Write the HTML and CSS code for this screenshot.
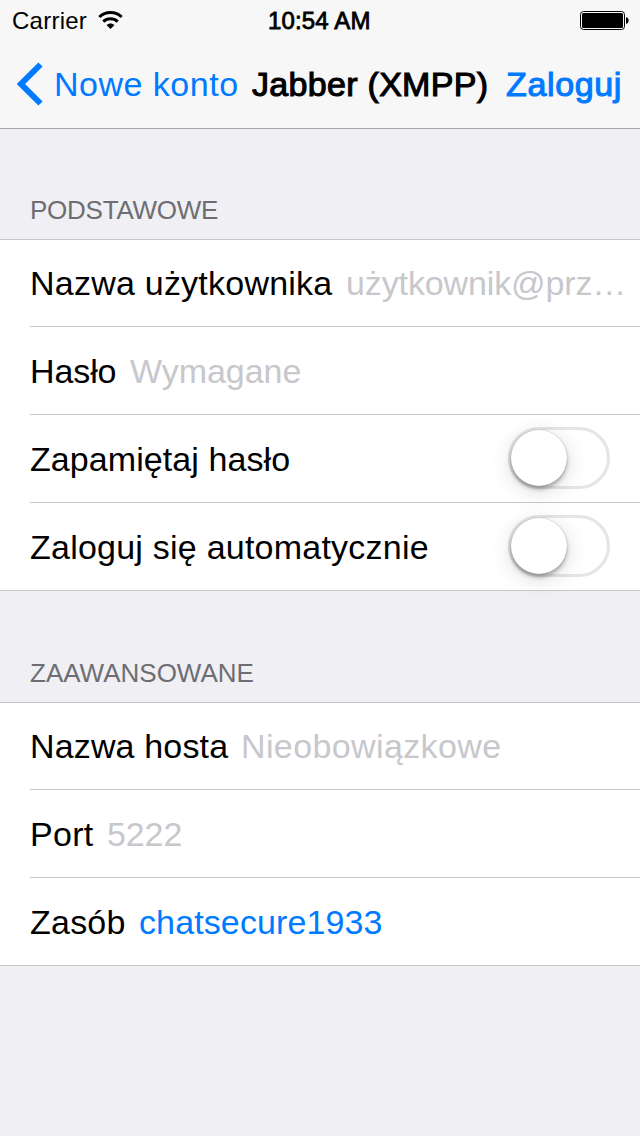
FILE: index.html
```html
<!DOCTYPE html>
<html lang="pl">
<head>
<meta charset="utf-8">
<title>Jabber (XMPP)</title>
<link rel="stylesheet" href="styles.css">
</head>
<body>
<header class="top">
  <div class="status">
    <div class="carrier"><span class="carrier-name">Carrier</span>
      <svg class="wifi" width="25" height="18" viewBox="0 0 25 18"><g fill="none" stroke="#000" stroke-width="3"><path d="M1.300 6C7.500 .1 17.500 .1 23.700 6"/><path d="M5.300 10.600C9.300 6.800 15.700 6.800 19.700 10.600"/></g><path d="M12.500 18 8.500 14.100C11 12 14 12 16.500 14.100Z"/></svg>
    </div>
    <span class="time">10:54 AM</span>
    <svg class="battery" width="49" height="20" viewBox="0 0 49 20"><rect x=".5" y="1.500" width="44" height="18" rx="3" fill="none" stroke="#000"/><rect x="2" y="3" width="41" height="15" rx="1.500"/><path d="M46 7.300C49.500 7.300 49.500 13.700 46 13.700Z"/></svg>
  </div>
  <nav class="nav">
    <svg class="chevron" width="26" height="44" viewBox="0 0 26 44"><path d="M23.500 2.500 4 22 23.500 41.500" fill="none" stroke="#007aff" stroke-width="6"/></svg>
    <span class="back">Nowe konto</span>
    <span class="title">Jabber (XMPP)</span>
    <span class="login">Zaloguj</span>
  </nav>
</header>
<main>
  <h2 class="heading basic"><span>PODSTAWOWE</span></h2>
  <section class="group">
    <div class="row first"><span class="label username">Nazwa użytkownika</span><span class="placeholder address">użytkownik@prz…</span></div>
    <div class="row"><span class="label password">Hasło</span><span class="placeholder required">Wymagane</span></div>
    <div class="row"><span class="label remember">Zapamiętaj hasło</span><span class="switch"><span class="knob"></span></span></div>
    <div class="row"><span class="label auto">Zaloguj się automatycznie</span><span class="switch"><span class="knob"></span></span></div>
  </section>
  <h2 class="heading advanced"><span>ZAAWANSOWANE</span></h2>
  <section class="group">
    <div class="row first"><span class="label host">Nazwa hosta</span><span class="placeholder optional">Nieobowiązkowe</span></div>
    <div class="row"><span class="label port">Port</span><span class="placeholder number">5222</span></div>
    <div class="row"><span class="label resource">Zasób</span><span class="value">chatsecure1933</span></div>
  </section>
</main>
</body>
</html>
```
FILE: styles.css
```css
* { box-sizing: border-box; }
body {
  margin: 0;
  height: 1136px;
  overflow: hidden;
  background: #efeff4;
  color: #000;
  font: 34px/40px "Liberation Sans", Arial, sans-serif;
  white-space: nowrap;
}
svg { display: block; flex: none; }
.top { height: 129px; background: #f7f7f7; border-bottom: 1px solid #a7a7ab; }
.status {
  height: 40px;
  padding: 0 11px 0 12px;
  display: grid;
  grid-template-columns: 256px 1fr 49px;
  align-items: center;
  font-size: 24px;
  line-height: 38px;
}
.carrier { display: flex; align-items: center; }
.carrier-name { width: 86px; padding-top: 2px; letter-spacing: .25px; }
.time { padding-top: 2px; -webkit-text-stroke: .8px #000; letter-spacing: .15px; }
.nav { height: 88px; display: flex; align-items: center; padding-left: 17px; }
.back, .title, .login { flex: none; }
.back { width: 197px; padding-left: 11px; color: #007aff; letter-spacing: .5px; }
.title { width: 254px; padding-left: 12px; letter-spacing: .3px; -webkit-text-stroke: 1.1px #000; }
.login { padding-left: 12px; color: #007aff; letter-spacing: .65px; -webkit-text-stroke: 1.1px #007aff; }
.heading {
  margin: 0;
  display: flex;
  align-items: flex-end;
  padding: 0 30px 13px;
  color: #6d6d72;
  font-size: 26px;
  font-weight: 400;
  line-height: 32px;
}
.basic { height: 110px; letter-spacing: -.25px; }
.advanced { height: 111px; }
.group { background: #fff; border: solid #c8c7cc; border-width: 1px 0; }
.row {
  height: 88px;
  margin-left: 30px;
  display: flex;
  align-items: center;
  border-top: 1px solid #c8c7cc;
}
.row.first { height: 86px; border-top: 0; }
.label { flex: none; letter-spacing: .23px; }
.username { width: 316px; }
.password { width: 100px; letter-spacing: -.1px; }
.remember { letter-spacing: .08px; }
.host { width: 211px; letter-spacing: .15px; }
.port { width: 77px; letter-spacing: .3px; }
.resource { width: 109px; }
.placeholder { color: #c7c7cc; }
.address { letter-spacing: -.12px; }
.required { letter-spacing: -.05px; }
.optional { letter-spacing: .38px; }
.number { letter-spacing: -.1px; }
.value { color: #007aff; letter-spacing: .12px; }
.switch {
  width: 102px;
  height: 62px;
  margin: 0 30px 2px auto;
  border: 3px solid #e5e5e5;
  border-radius: 31px;
}
.knob {
  display: block;
  width: 56px;
  height: 56px;
  border-radius: 50%;
  background: #fff;
  box-shadow: 0 0 1px rgba(0,0,0,.3), 0 3px 4px rgba(0,0,0,.3), 0 5px 22px rgba(0,0,0,.15);
}
```
